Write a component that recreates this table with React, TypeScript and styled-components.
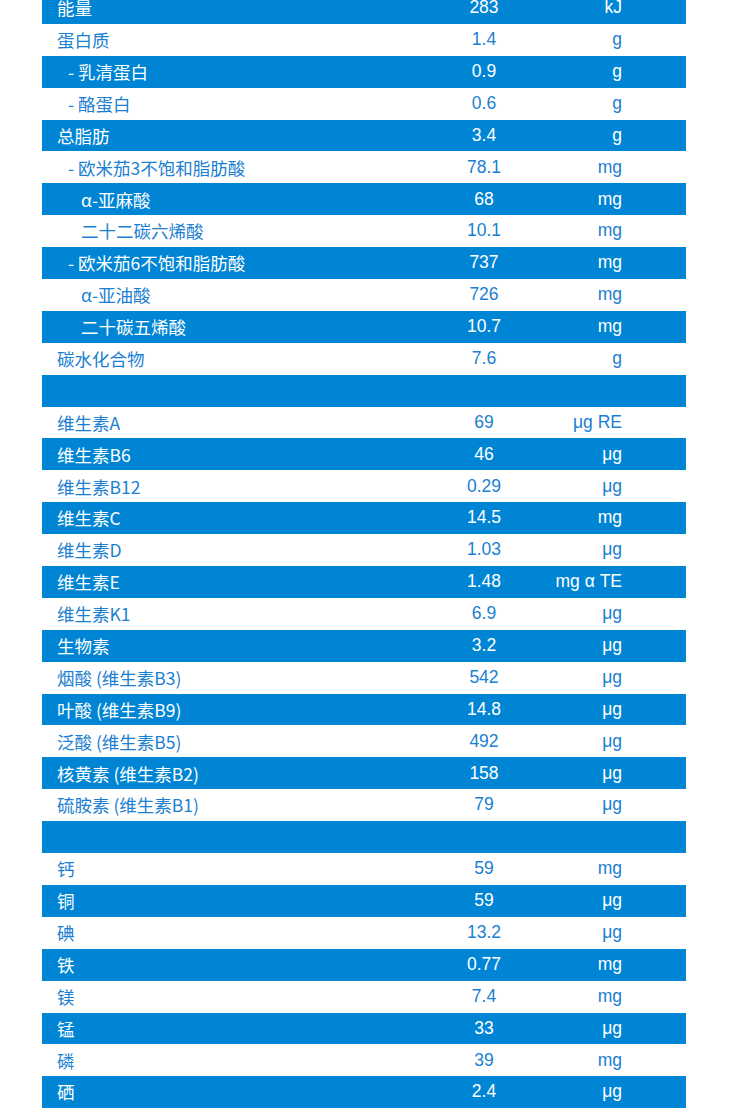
import styled, { createGlobalStyle } from "styled-components";

const GlobalStyle = createGlobalStyle`
  body {
    margin: 0;
    background: #ffffff;
  }
`;

// Page wrapper
const Page = styled.div`
  width: 730px;
  height: 1113px;
  overflow: hidden;
  background: #ffffff;
`;

// Nutrition table
const Table = styled.div`
  margin: -8px 0 0 42px;
  width: 644px;
  display: flex;
  flex-direction: column;
`;

const Row = styled.div<{ $blue: boolean }>`
  height: 31.9px;
  display: grid;
  grid-template-columns: 382px 120px 78px 64px;
  align-items: center;
  background: ${(p) => (p.$blue ? "#0085d5" : "#ffffff")};
  color: ${(p) => (p.$blue ? "#ffffff" : "#1b80d2")};
`;

const Label = styled.div<{ $indent: number }>`
  padding-left: ${(p) => [15, 26, 39][p.$indent]}px;
  font-family: "Noto Sans CJK SC", "Open Sans", sans-serif;
  font-size: 17.5px;
  line-height: 1;
  white-space: nowrap;
`;

const Value = styled.div`
  text-align: center;
  font-family: "Liberation Sans", Arial, sans-serif;
  font-size: 17.5px;
  line-height: 1;
`;

const Unit = styled.div`
  text-align: right;
  font-family: "Liberation Sans", Arial, sans-serif;
  font-size: 17.5px;
  line-height: 1;
  white-space: nowrap;
`;

type Item = [string, string, string, number?];

const rows: Item[] = [
  ["能量", "283", "kJ"],
  ["蛋白质", "1.4", "g"],
  ["- 乳清蛋白", "0.9", "g", 1],
  ["- 酪蛋白", "0.6", "g", 1],
  ["总脂肪", "3.4", "g"],
  ["- 欧米茄3不饱和脂肪酸", "78.1", "mg", 1],
  ["α-亚麻酸", "68", "mg", 2],
  ["二十二碳六烯酸", "10.1", "mg", 2],
  ["- 欧米茄6不饱和脂肪酸", "737", "mg", 1],
  ["α-亚油酸", "726", "mg", 2],
  ["二十碳五烯酸", "10.7", "mg", 2],
  ["碳水化合物", "7.6", "g"],
  ["", "", ""],
  ["维生素A", "69", "μg RE"],
  ["维生素B6", "46", "μg"],
  ["维生素B12", "0.29", "μg"],
  ["维生素C", "14.5", "mg"],
  ["维生素D", "1.03", "μg"],
  ["维生素E", "1.48", "mg α TE"],
  ["维生素K1", "6.9", "μg"],
  ["生物素", "3.2", "μg"],
  ["烟酸 (维生素B3)", "542", "μg"],
  ["叶酸 (维生素B9)", "14.8", "μg"],
  ["泛酸 (维生素B5)", "492", "μg"],
  ["核黄素 (维生素B2)", "158", "μg"],
  ["硫胺素 (维生素B1)", "79", "μg"],
  ["", "", ""],
  ["钙", "59", "mg"],
  ["铜", "59", "μg"],
  ["碘", "13.2", "μg"],
  ["铁", "0.77", "mg"],
  ["镁", "7.4", "mg"],
  ["锰", "33", "μg"],
  ["磷", "39", "mg"],
  ["硒", "2.4", "μg"],
];

const App = () => {
  return (
    <Page>
      <GlobalStyle />
      <Table>
        {rows.map(([label, value, unit, indent], i) => (
          <Row key={i} $blue={i % 2 === 0}>
            <Label $indent={indent ?? 0}>{label}</Label>
            <Value>{value}</Value>
            <Unit>{unit}</Unit>
            <span />
          </Row>
        ))}
      </Table>
    </Page>
  );
};

export default App;
